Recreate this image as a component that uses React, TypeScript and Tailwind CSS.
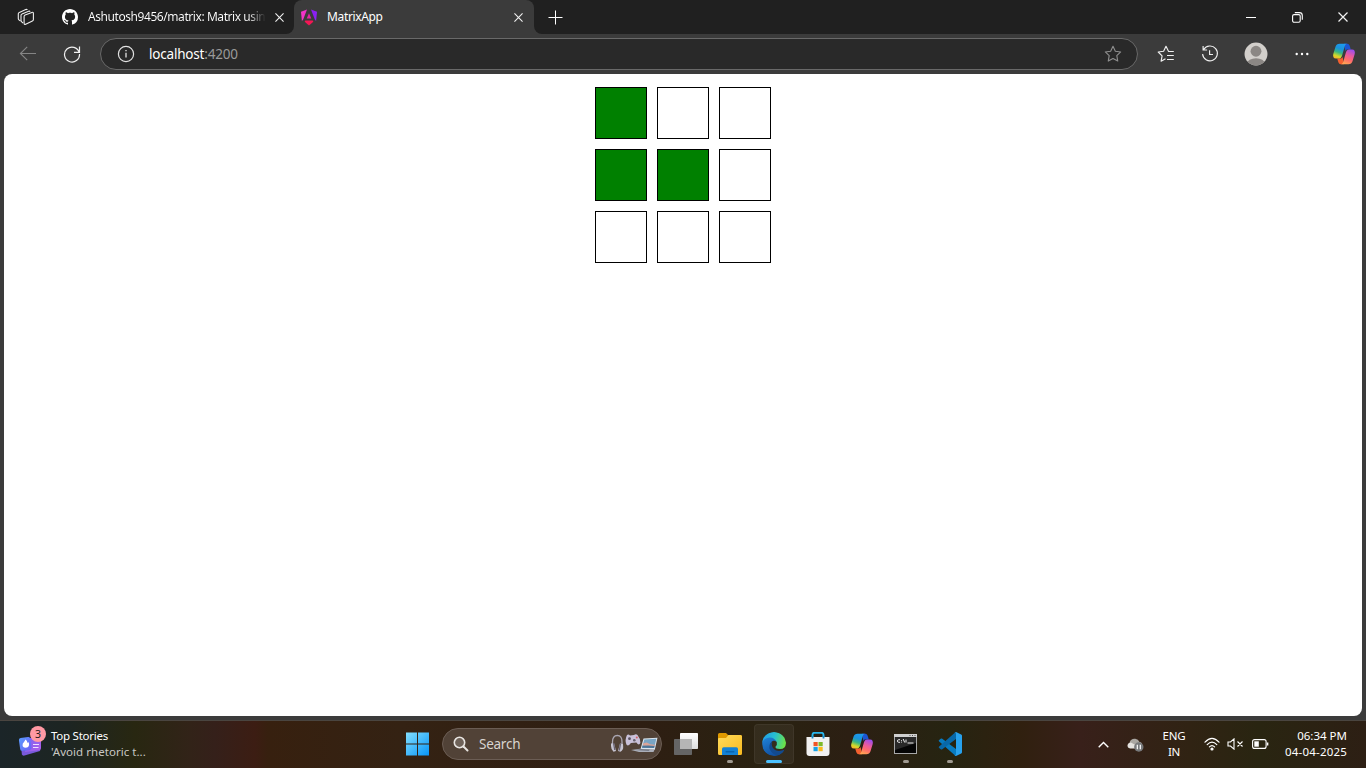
import React from "react";

const grid = [
  [true, false, false],
  [true, true, false],
  [false, false, false],
];

function CloseIcon({ size = 9 }: { size?: number }) {
  return (
    <svg width={size} height={size} viewBox="0 0 10 10" className="block shrink-0" stroke="#f2f2f2" strokeWidth="1.2" fill="none">
      <path d="M.5.5l9 9M9.5.5l-9 9" />
    </svg>
  );
}

function Copilot({ id }: { id: string }) {
  return (
    <svg width="24" height="22" viewBox="0 0 24 22" className="block shrink-0">
      <defs>
        <linearGradient id={id + "a"} x1=".65" y1="0" x2=".3" y2="1">
          <stop offset="0" stopColor="#1d9bf0" />
          <stop offset=".35" stopColor="#1a93dc" />
          <stop offset=".6" stopColor="#38b583" />
          <stop offset=".85" stopColor="#d5d928" />
          <stop offset="1" stopColor="#f5b82c" />
        </linearGradient>
        <linearGradient id={id + "b"} x1=".75" y1="0" x2=".35" y2="1">
          <stop offset="0" stopColor="#9a4df0" />
          <stop offset=".4" stopColor="#ea5a9c" />
          <stop offset=".7" stopColor="#ff6d69" />
          <stop offset="1" stopColor="#ffa552" />
        </linearGradient>
      </defs>
      <path d="M12 .8h3.300c1.500 0 2 1 2.500 2.500l1 3.200h-3.400c-1.200 0-1.700.7-2 1.700z" fill="#1c55d4" />
      <path d="M12 21.200H8.700c-1.500 0-2-1-2.500-2.500l-1-3.200h3.400c1.200 0 1.700-.7 2-1.700z" fill="#f4602f" />
      <path d="M7.600.8h7.700c-1.500 0-2.200 1.200-2.700 2.900l-2.500 8.700c-.6 2-1.500 3.100-3.500 3.100H4C1.500 15.500.7 13.500 1.300 11l2.200-7.200C4.100 1.900 5.500.8 7.600.8z" fill={`url(#${id}a)`} />
      <path d="M16.400 21.200H8.700c1.500 0 2.200-1.200 2.700-2.900l2.500-8.700c.6-2 1.500-3.100 3.500-3.100H20c2.500 0 3.300 2 2.700 4.500l-2.200 7.200c-.6 1.900-2 3-4.100 3z" fill={`url(#${id}b)`} />
    </svg>
  );
}

function TabStrip() {
  return (
    <div className="flex h-[34px] bg-[#3b3b3b]">
      <div className="flex w-[294px] items-center rounded-br-lg bg-[#202020]">
        <svg width="18" height="18" viewBox="0 0 18 18" className="ml-[17px] shrink-0" fill="#202020" stroke="#eee" strokeWidth="1.1" strokeLinejoin="round">
          <path d="M3.600 13.200L1.900 11.800Q1.300 11.300 1.300 10.500V5.800q0-1 1-1.400L8.800 1.500q1-.4 1.600.4" />
          <path d="M6.100 15L4.700 13.800Q4 13.200 4 12.300V7.500q0-1 1-1.400L11.600 3.200q1-.4 1.600.4" />
          <path d="M7.100 8.500q0-1 1-1.400l6.800-2.700q1.500-.5 1.500 1v6.100q0 1-1 1.400l-6.700 3.300q-1.600.6-1.600-1z" />
        </svg>
        <svg width="16" height="16" viewBox="0 0 16 16" className="ml-[27px] shrink-0" fill="#fff">
          <path d="M8 0C3.580 0 0 3.580 0 8c0 3.540 2.290 6.530 5.470 7.590.4.070.55-.17.55-.38 0-.19-.01-.82-.01-1.490-2.010.37-2.530-.49-2.690-.94-.09-.23-.48-.94-.82-1.130-.28-.15-.68-.52-.01-.53.63-.01 1.080.58 1.230.82.72 1.210 1.870.87 2.330.66.07-.52.28-.87.51-1.070-1.780-.2-3.640-.89-3.640-3.950 0-.87.31-1.590.82-2.150-.08-.2-.36-1.020.08-2.120 0 0 .67-.21 2.200.82.64-.18 1.320-.27 2-.27s1.360.09 2 .27c1.530-1.040 2.200-.82 2.200-.82.44 1.100.16 1.920.08 2.120.51.56.82 1.270.82 2.150 0 3.070-1.870 3.750-3.650 3.950.29.25.54.73.54 1.480 0 1.070-.01 1.930-.01 2.200 0 .21.15.46.55.38A8.010 8.010 0 0 0 16 8c0-4.420-3.580-8-8-8z" />
        </svg>
        <div className="ml-[10px] w-[178px] overflow-hidden whitespace-nowrap bg-gradient-to-r from-white from-90% to-[#202020] bg-clip-text text-[12px] tracking-[-0.43px] text-transparent">
          Ashutosh9456/matrix: Matrix usin
        </div>
        <div className="ml-[9px]"><CloseIcon /></div>
      </div>
      <div className="w-[240px] bg-[#202020]">
        <div className="flex h-full items-center rounded-t-lg bg-[#3b3b3b]">
          <svg width="16" height="17" viewBox="0 0 16 17" className="ml-[7px] shrink-0">
            <defs>
              <linearGradient id="ng" x1="0" y1=".2" x2="1" y2=".1">
                <stop offset="0" stopColor="#f637c8" />
                <stop offset=".5" stopColor="#ed27c6" />
                <stop offset=".65" stopColor="#8a18f0" />
                <stop offset="1" stopColor="#8b27f5" />
              </linearGradient>
            </defs>
            <path d="M0 2.800L6 .4 2.200 10.500.9 12.100zM10 .4l6 2.400-.9 9.300-1.300-1.600z" fill="url(#ng)" />
            <path d="M8 4.300l2.300 5.300H5.700z" fill="#e823a5" />
            <path d="M3.700 12.800l.6-1.300h7.400l.6 1.300L8 16.500z" fill="#f51655" />
          </svg>
          <span className="ml-[10px] text-[12px] tracking-[-0.35px] text-white">MatrixApp</span>
          <div className="ml-auto mr-[11px]"><CloseIcon /></div>
        </div>
      </div>
      <div className="flex flex-1 items-center rounded-bl-lg bg-[#202020]">
        <svg width="15" height="15" viewBox="0 0 15 15" className="ml-[14px]" stroke="#fff" strokeWidth="1" fill="none">
          <path d="M7.500.5v14M.5 7.500h14" />
        </svg>
        <div className="ml-auto flex items-center pr-[18px]">
          <svg width="10" height="10" viewBox="0 0 10 10" stroke="#fff"><path d="M0 5.500h10" /></svg>
          <svg width="11" height="11" viewBox="0 0 11 11" className="ml-[36px]" fill="none" stroke="#fff" strokeWidth="1.100">
            <rect x=".6" y="2.600" width="7.600" height="7.600" rx="1.500" />
            <path d="M2.800.6h4.600q2.900 0 2.900 2.900v4.300" />
          </svg>
          <div className="ml-[35px]"><CloseIcon size={10} /></div>
        </div>
      </div>
    </div>
  );
}

function Toolbar() {
  return (
    <div className="flex h-10 items-center">
      <svg width="18" height="16" viewBox="0 0 18 16" className="ml-[19px] shrink-0" fill="none" stroke="#858585" strokeWidth="1.100">
        <path d="M17 7.500H1.500M8.200.8L1.400 7.500l6.800 6.700" />
      </svg>
      <svg width="18" height="18" viewBox="0 0 18 18" className="ml-[26px] shrink-0" fill="none" stroke="#f0f0f0" strokeWidth="1.200">
        <path d="M16.200 7.400A7.500 7.500 0 1 0 16.500 9M16.500 1.500v5.800H11" />
      </svg>
      <div className="ml-[19px] flex h-8 w-[1038px] items-center rounded-full border border-[#696969] bg-[#292929]">
        <svg width="18" height="18" viewBox="0 0 18 18" className="ml-[16px] shrink-0" fill="none" stroke="#e2e2e2" strokeWidth="1.200">
          <circle cx="9" cy="9" r="7.600" />
          <path d="M9 7.700v4.700M9 5v1.300" strokeWidth="1.300" />
        </svg>
        <span className="ml-[14px] mt-px text-[13.500px] tracking-[-0.2px] text-white">
          localhost<span className="text-[#9a9a9a]">:4200</span>
        </span>
        <svg width="18" height="18" viewBox="0 0 18 18" className="ml-auto mr-[15px]" fill="none" stroke="#8f8f8f" strokeWidth="1.100" strokeLinejoin="round">
          <path d="M9 1.300l2.350 4.900 5.350.75-3.900 3.750.95 5.350L9 13.500l-4.750 2.550.95-5.350-3.900-3.750 5.350-.75z" />
        </svg>
      </div>
      <svg width="18" height="18" viewBox="0 0 18 18" className="ml-[19px]" fill="none" stroke="#f0f0f0" strokeWidth="1.150" strokeLinejoin="round">
        <path d="M16.800 6.500h-5.200L9 1.300 6.600 6.300 1.200 7l3.900 3.800-1 5.400 4.400-2.500M10 10.500h6.800M10 14.500h6.800" />
      </svg>
      <svg width="18" height="18" viewBox="0 0 18 18" className="ml-[26px]" fill="none" stroke="#f0f0f0" strokeWidth="1.150">
        <path d="M2.700 4.500A7.400 7.400 0 1 1 1.600 9M2.100 1v4h4M8.600 5.200v4.300H12" />
      </svg>
      <svg width="24" height="24" viewBox="0 0 23 23" className="ml-[25px]">
        <defs><clipPath id="av"><circle cx="11.500" cy="11.500" r="11" /></clipPath></defs>
        <circle cx="11.500" cy="11.500" r="11" fill="#d2cfcb" />
        <g clipPath="url(#av)" fill="#8b8784">
          <circle cx="11.500" cy="8.900" r="5.200" />
          <ellipse cx="11.500" cy="20.500" rx="8.500" ry="5" />
        </g>
      </svg>
      <svg width="14" height="4" viewBox="0 0 14 4" className="ml-[27px]" fill="#fff">
        <circle cx="1.700" cy="2" r="1.200" /><circle cx="7" cy="2" r="1.200" /><circle cx="12.300" cy="2" r="1.200" />
      </svg>
      <div className="ml-[23px]"><Copilot id="c1" /></div>
    </div>
  );
}

function AppSlot({ children, dot, active }: { children: React.ReactNode; dot?: boolean; active?: boolean }) {
  return (
    <div className={`relative flex h-10 w-10 items-center justify-center rounded ${active ? "bg-white/5 shadow-[inset_0_0_0_1px_#ffffff0d]" : ""}`}>
      {children}
      {dot && <span className="absolute bottom-px left-[17px] h-[3px] w-[6px] rounded-full bg-[#a09a91]" />}
      {active && <span className="absolute bottom-px left-3 h-[3px] w-4 rounded-full bg-[#4cc2ff]" />}
    </div>
  );
}

function SearchArt() {
  return (
    <svg width="48" height="22" viewBox="0 0 48 22" className="ml-auto mr-[3px]">
      <path d="M2.500 12V9q0-6.500 4.800-6.500T12 9v3" fill="none" stroke="#aaa6b2" strokeWidth="1.300" />
      <path d="M1 10.500l3-.5 2 8-2.500.8Q1 16.500 1 13zM13 11l-3-.5-2 7.500 2.500.8q3-2 2.700-5z" fill="#c5c3d0" />
      <path d="M3.500 10l1.300 7M10.500 10.500l-1.200 7" stroke="#655f70" strokeWidth="1.300" />
      <path d="M17 2q1.500-1 3 .5l4-.5q2-1.500 3.500 0 3 3.500 2.900 8-1.500 3-4-.5l-5.500.6q-2.500 4-4.500 1.500Q14.500 7 17 2z" fill="#c9c1d9" />
      <circle cx="19.500" cy="5.700" r="1.400" fill="#57505f" /><circle cx="24.300" cy="7.300" r="1.300" fill="#68616e" /><circle cx="26.800" cy="4.400" r="1" fill="#d75e67" />
      <path d="M33.500 5.500L47.500 4.700l-2.700 12-14.300-.5z" fill="#dce6ef" />
      <path d="M34.300 6.500L46.300 5.700l-2.100 9.300-12.200-.3z" fill="#79a5c4" />
      <path d="M33.300 10.300l3.500-.8 3.500 1.800 4.500.5-.4 1.400-11.500-.4z" fill="#dca497" />
      <path d="M32.500 12.800l6-.3 6 .4-.5 2-12-.2z" fill="#4d7698" />
      <path d="M21 17l9-1.300 14.500 1-1 2.300H29z" fill="#aaaeb9" />
      <path d="M25 17l6-.8 9 .6-1.300 1z" fill="#656975" />
    </svg>
  );
}

function Taskbar() {
  return (
    <div className="flex h-12 items-center border-t border-[#4a4540] bg-[linear-gradient(90deg,#1b2528_0,#1d2522_70px,#282711_135px,#322318_190px,#35201a_215px,#3c1d13_255px,#37200f_268px,#342213_400px,#2e1e12_640px,#292211_770px,#2c1f13_850px,#262411_950px,#30200f_1020px,#38201a_1080px,#302313_1190px,#292511_1260px,#2d1f14_1366px)] pb-px">
      <div className="flex w-[397px] items-center">
        <div className="relative ml-[18px] mt-[-4px] h-8 w-[28px]">
          <svg width="28" height="32" viewBox="0 0 28 32">
            <defs>
              <linearGradient id="nw" x1="0" y1="0" x2="1" y2="1"><stop stopColor="#589cff" /><stop offset="1" stopColor="#6d5df4" /></linearGradient>
              <linearGradient id="nx" x1="0" y1="0" x2="1" y2="1"><stop stopColor="#7665f2" /><stop offset="1" stopColor="#b45de9" /></linearGradient>
            </defs>
            <path d="M3.500 25l19.500-6-1 6-15.500 4.500q-2 .5-2.600-1z" fill="#7959db" />
            <path d="M10 12h11q2 0 2 2v8q0 2-2 2.300L7 26z" fill="url(#nx)" />
            <rect x="1.500" y="11.500" width="11.500" height="13" rx="2" fill="url(#nw)" transform="rotate(-8 7 18)" />
            <path d="M7.500 13.500q-1 2-2.700 4-1 3.800 2.300 4.200 4 0 4-3.500 0-1.500-1-2.300l-.7 1.200q.1-2.300-1.900-3.600z" fill="#fff" />
            <path d="M15 18.500h6M15 21.500h5.500" stroke="#eee0ff" strokeWidth="1.200" />
          </svg>
          <span className="absolute left-[12px] top-0 flex h-4 w-4 items-center justify-center rounded-full bg-[#ff99a4] text-[10.500px] leading-none text-[#261b1b]">3</span>
        </div>
        <div className="ml-[5px] text-[11.500px] leading-4 tracking-[-0.25px]">
          <div className="text-white">Top Stories</div>
          <div className="tracking-[0.04px] text-[#c9c8c3]">'Avoid rhetoric t...</div>
        </div>
      </div>
      <AppSlot>
        <svg width="24" height="24" viewBox="0 0 24 24">
          <defs><linearGradient id="wn" x1="0" y1="0" x2="1" y2="1"><stop stopColor="#83dfff" /><stop offset="1" stopColor="#0795f7" /></linearGradient></defs>
          <path d="M1 .5h11v11H1zM13 .5h11v11H13zM1 12.500h11v11H1zM13 12.500h11v11H13z" fill="url(#wn)" />
        </svg>
      </AppSlot>
      <div className="ml-[5px] flex h-8 w-[220px] items-center rounded-full border border-[#6b5d54] bg-[#514237]">
        <svg width="16" height="16" viewBox="0 0 16 16" className="ml-[10px]" fill="#6e6259" stroke="#e8e5e2" strokeWidth="1.600" strokeLinecap="round">
          <path d="M10.500 10.500l4 4" strokeWidth="2" /><circle cx="6.500" cy="6.500" r="5.200" />
        </svg>
        <span className="ml-[10px] text-[13.500px] tracking-[-0.25px] text-[#d8d4d0]">Search</span>
        <SearchArt />
      </div>
      <div className="ml-[4px] flex gap-1">
        <AppSlot>
          <svg width="24" height="22" viewBox="0 0 24 22">
            <defs><linearGradient id="tv" x1="0" y1="0" x2="0" y2="1"><stop stopColor="#fff" /><stop offset="1" stopColor="#ddd" /></linearGradient></defs>
            <rect x="6" y="0" width="18" height="16" rx=".8" fill="url(#tv)" />
            <rect x="0" y="6" width="18" height="16" rx=".8" fill="#656565" />
            <path d="M6 6h12v10H6z" fill="#b5b5b5" />
          </svg>
        </AppSlot>
        <AppSlot dot>
          <svg width="24" height="22" viewBox="0 0 24 22">
            <defs><linearGradient id="fe" x1="0" y1="0" x2="1" y2="1"><stop stopColor="#ffdb5b" /><stop offset="1" stopColor="#f8b91f" /></linearGradient></defs>
            <path d="M0 1.500Q0 0 1.500 0H8l2 2h12.500Q24 2 24 3.500V8H0z" fill="#df9900" />
            <path d="M0 6q0-1 1-1h7l2.500-3h12Q24 2 24 3.500v17q0 1.500-1.500 1.500h-21Q0 22 0 20.500z" fill="url(#fe)" />
            <path d="M4 22v-6q0-1.700 1.700-1.700h12.600q1.700 0 1.700 1.700v6z" fill="#1381d4" />
            <rect x="7.500" y="18" width="9" height="1.600" rx=".8" fill="#0864af" />
          </svg>
        </AppSlot>
        <AppSlot active>
          <svg width="24" height="24" viewBox="0 0 24 24">
            <defs>
              <linearGradient id="e1" x1="0" y1=".3" x2="1" y2=".5"><stop stopColor="#209ce8" /><stop offset=".5" stopColor="#27bfd1" /><stop offset="1" stopColor="#6de344" /></linearGradient>
              <linearGradient id="e2" x1="0" y1="0" x2=".5" y2="1"><stop stopColor="#2085dc" /><stop offset="1" stopColor="#104f9e" /></linearGradient>
              <clipPath id="ec"><circle cx="12" cy="12" r="12" /></clipPath>
            </defs>
            <g clipPath="url(#ec)">
              <path d="M0 10Q1.300 4 8 4.600q5 .5 6.500 5.200-3-2-5.100.3-2.700 3.400.6 8 3.500 4.500 12 .7-3.500 5.700-10 5.200Q0 23 0 10z" fill="url(#e2)" />
              <path d="M0 11Q0 0 12 0q12 0 12 11-.2 6-6 6-4.800 0-4.500-2.200 2-1.800 1.300-4.500Q12.700 5.500 7.800 5.400 2 5.500 0 11z" fill="url(#e1)" />
              <path d="M10.500 9.200q-5 3.300-2.300 9.100 2.800 5.200 8.300 4.800 4.500-1.500 6.300-5.300-8.300 2.900-11.800-1.800-2.200-3.500-.5-6.800z" fill="#124a8e" />
            </g>
          </svg>
        </AppSlot>
        <AppSlot>
          <svg width="24" height="24" viewBox="0 0 24 24" className="mr-px">
            <path d="M6.500 6V3q0-2.200 2-2.200h7q2 0 2 2.200v3" fill="none" stroke="#28b7ee" strokeWidth="1.900" />
            <path d="M.5 5h23v16q0 3-3 3h-17q-3 0-3-3z" fill="#f1f1f1" />
            <path d="M6.500 4v2.500M17.500 4v2.500" stroke="#1689cb" strokeWidth="1.800" />
            <path d="M7.500 10h4.200v4.200H7.500z" fill="#f05324" /><path d="M12.500 10h4.200v4.200h-4.200z" fill="#7db928" /><path d="M7.500 15h4.200v4.200H7.500z" fill="#159fe5" /><path d="M12.500 15h4.200v4.200h-4.200z" fill="#f9b91d" />
          </svg>
        </AppSlot>
        <AppSlot><Copilot id="c2" /></AppSlot>
        <AppSlot dot>
          <svg width="23" height="20" viewBox="0 0 23 20" className="mr-px">
            <rect x=".5" y=".5" width="22" height="19" fill="#050505" stroke="#a8a8a8" />
            <path d="M0 0h23v3H0z" fill="#d0d0d0" />
            <path d="M15.500 1.500h1M18 1.500h1M20.500 1.500h1" stroke="#555" />
            <path d="M1 3h21v6L1 16z" fill="#292929" />
            <path d="M6 5.700H4.600Q3.500 5.700 3.500 7t1.100 1.300H6M7.500 6v.8M7.500 7.700v.8M9.200 5l1.500 3.500M12 5.500v3M13.500 9h6" stroke="#eee" fill="none" />
          </svg>
        </AppSlot>
        <AppSlot dot>
          <svg width="24" height="24" viewBox="0 0 24 24">
            <path d="M1.200 8.100L3 6.600q.7-.4 1.300.1L18 17v6.800q-.8 0-1.500-.7L.9 9.200q-.6-.6.3-1.100z" fill="#087bc0" />
            <path d="M1.200 15.900L3 17.400q.7.400 1.300-.1L18 7V.2q-.8 0-1.500.7L.9 14.800q-.6.600.3 1.100z" fill="#0868a9" />
            <path d="M18 0l5.200 2.400q.8.400.8 1.400v16.400q0 1-.8 1.400L18 24q-1 .2-1.700-.7 1.700.7 1.700-1.200V1.900q0-1.900-1.700-1.200Q17 0 18 0z" fill="#27a1ed" />
          </svg>
        </AppSlot>
      </div>
      <div className="ml-auto flex items-center pr-[19px] text-[11.500px] leading-4 tracking-[-0.2px] text-white">
        <svg width="11" height="7" viewBox="0 0 11 7" fill="none" stroke="#fff" strokeWidth="1.400"><path d="M.7 6.200l4.800-4.800 4.800 4.800" /></svg>
        <svg width="17" height="14" viewBox="0 0 17 14" className="ml-[18px] mt-[2px]">
          <path d="M2.500 4.500Q4 .3 8.300.8q3 .4 4.200 3.200 3 .3 2.500 3L7 10z" fill="#aaa7a2" />
          <path d="M3.200 10.500Q.3 10 .5 7q.5-2.600 3.400-2.500L12 9l-4 1.500z" fill="#e4e2df" />
          <circle cx="11.800" cy="9" r="4.700" fill="#77797b" /><path d="M10.300 6.800v4.500M13.300 6.800v4.500" stroke="#fff" strokeWidth="1.200" />
        </svg>
        <div className="ml-[17px] w-[26px] text-center"><div>ENG</div><div>IN</div></div>
        <svg width="16" height="14" viewBox="0 0 16 14" className="ml-[17px]" fill="none" stroke="#fff" strokeWidth="1.200" strokeLinecap="round">
          <path d="M1 5.200q7-7.600 14 0M3.200 7.600q4.800-5 9.600 0M5.400 9.900q2.600-2.600 5.200 0" /><circle cx="8" cy="12" r="1" fill="#fff" />
        </svg>
        <svg width="17" height="12" viewBox="0 0 17 12" className="ml-[7px]" fill="none" stroke="#fff" strokeWidth="1.100">
          <path d="M1 4h2.500L7 .9v10.200L3.500 8H1zM10.500 3.500l5 5M15.500 3.500l-5 5" />
        </svg>
        <svg width="17" height="10" viewBox="0 0 17 10" className="ml-[8px]" fill="none" stroke="#fff" strokeWidth="1.100">
          <rect x=".6" y=".6" width="13.500" height="8.800" rx="2" /><path d="M2.300 2.300h4.500v5.400H2.300z" fill="#fff" stroke="none" /><path d="M15.600 3.500v3" strokeWidth="1.500" />
        </svg>
        <div className="ml-[14px] w-[64px] whitespace-nowrap text-right"><div className="tracking-[0]">06:34 PM</div><div className="tracking-[0.2px]">04-04-2025</div></div>
      </div>
    </div>
  );
}

export default function App() {
  return (
    <div className="flex h-[768px] w-[1366px] flex-col overflow-hidden bg-[#3b3b3b] font-['Noto_Sans','Open_Sans',sans-serif]">
      <TabStrip />
      <Toolbar />
      <main className="mx-1 mb-1 flex flex-1 justify-center rounded-lg bg-white pt-[13px]">
        <div className="grid h-[176px] grid-cols-3 gap-[10px]">
          {grid.flat().map((on, i) => (
            <div key={i} className={`h-[52px] w-[52px] border border-black ${on ? "bg-[#008000]" : "bg-white"}`} />
          ))}
        </div>
      </main>
      <Taskbar />
    </div>
  );
}
